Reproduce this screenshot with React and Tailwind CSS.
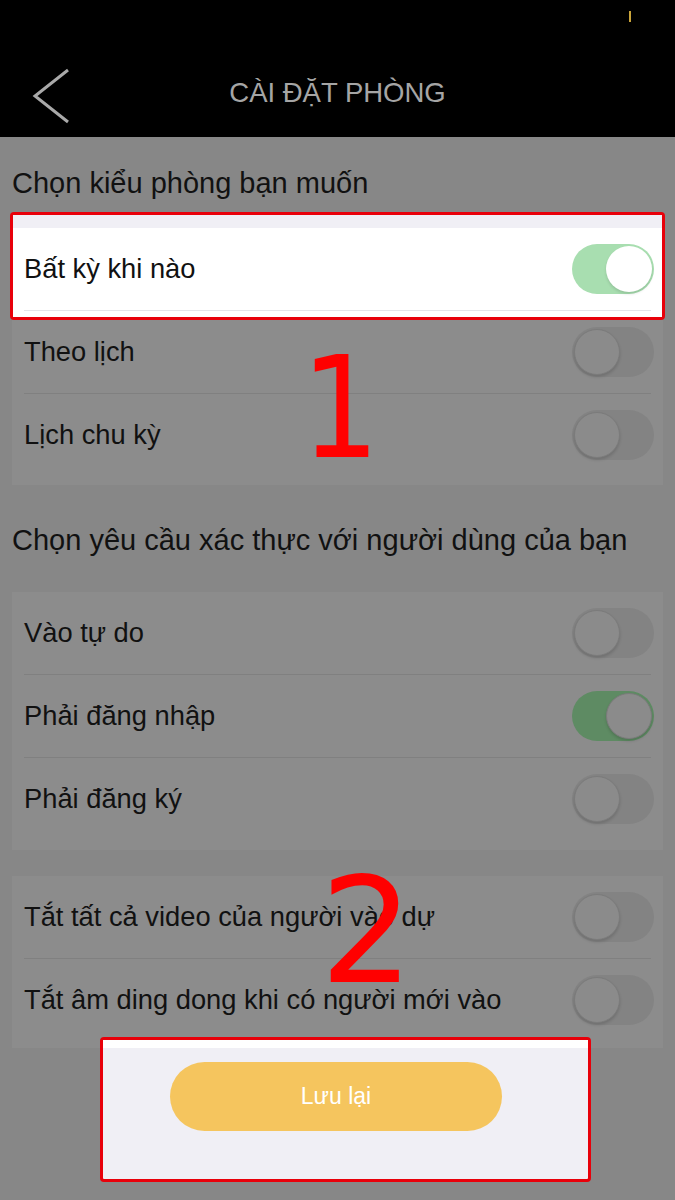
import React from 'react';

const FONT = { fontFamily: '"Liberation Sans", Arial, sans-serif' };

function Toggle({ on, bright }) {
  if (bright) {
    return (
      <div className="w-[82px] h-[50px] rounded-full p-[2px] flex justify-end bg-[#a8deb0]">
        <div className="w-[46px] h-[46px] rounded-full bg-white shadow-[0_2px_3px_rgba(0,0,0,0.12)]" />
      </div>
    );
  }
  return (
    <div
      className={
        on
          ? 'w-[82px] h-[50px] rounded-full p-[2px] flex justify-end bg-[#5e8b63]'
          : 'w-[82px] h-[50px] rounded-full p-[2px] flex bg-[#838383]'
      }
    >
      <div className="w-[46px] h-[46px] rounded-full bg-[#8b8b8b] border border-[#7b7b7b] shadow-[0_2px_3px_rgba(0,0,0,0.15)]" />
    </div>
  );
}

function Row({ label, on, bright, last, lightLine }) {
  return (
    <div className={bright ? 'bg-white' : ''}>
      <div className="h-[82px] flex items-center justify-between pl-[12px] pr-[9px]">
        <span className="text-[27.3px] text-[#111]">{label}</span>
        <Toggle on={on} bright={bright} />
      </div>
      {!last && (
        <div className="px-[12px]">
          <div className={lightLine ? 'h-px bg-[#e4e4e9]' : 'h-px bg-[#808080]'} />
        </div>
      )}
    </div>
  );
}

function Card({ children, pb }) {
  return <div className={'mx-[12px] bg-[#8c8c8c] ' + pb}>{children}</div>;
}

export default function App() {
  return (
    <div className="relative w-[675px] h-[1200px] overflow-hidden bg-[#878787]" style={FONT}>
      {/* header */}
      <header className="bg-black h-[137px] flex flex-col">
        <div className="h-[48px] flex justify-end pr-[44px] pt-[11px]">
          <div className="w-[2px] h-[11px] bg-[#c9a43a]" />
        </div>
        <div className="flex-1 grid grid-cols-[100px_1fr_100px] items-center">
          <div className="pl-[32px] pt-[6px]">
            <svg width="38" height="56" viewBox="0 0 38 56" fill="none">
              <path d="M36 2 L3 28 L36 54" stroke="#a9a9a9" strokeWidth="3" />
            </svg>
          </div>
          <h1 className="text-center text-[27.5px] text-[#a5a5a5] pt-[1px]">CÀI ĐẶT PHÒNG</h1>
          <div />
        </div>
      </header>

      <div className="h-[91px] flex items-center pl-[12px] pt-[2px]">
        <span className="text-[29px] text-[#111]">Chọn kiểu phòng bạn muốn</span>
      </div>

      <Card pb="pb-[9px]">
        <Row label="Bất kỳ khi nào" bright lightLine />
        <Row label="Theo lịch" />
        <Row label="Lịch chu kỳ" last />
      </Card>

      <div className="h-[107px] flex items-center pl-[12px] pt-[4px]">
        <span className="text-[29px] text-[#111]">Chọn yêu cầu xác thực với người dùng của bạn</span>
      </div>

      <Card pb="pb-[10px]">
        <Row label="Vào tự do" />
        <Row label="Phải đăng nhập" on />
        <Row label="Phải đăng ký" last />
      </Card>

      <div className="h-[26px]" />

      <Card pb="pb-[7px]">
        <Row label="Tắt tất cả video của người vào dự" />
        <Row label="Tắt âm ding dong khi có người mới vào" last />
      </Card>

      {/* highlighted save area */}
      <div className="relative z-10 mt-[-11px] ml-[100px] w-[491px] h-[145px] border-[3px] border-[#e8000a] rounded-[4px] bg-[#f0eff5] flex flex-col">
        <div className="h-[8px] bg-white" />
        <button className="mt-[14px] ml-[67px] w-[332px] h-[69px] rounded-[35px] bg-[#f5c55e] text-white text-[23px]">
          Lưu lại
        </button>
      </div>

      {/* highlight around first option */}
      <div className="absolute left-[10px] top-[212px] w-[655px] h-[108px] border-[3px] border-[#e8000a] rounded-[4px] flex flex-col">
        <div className="h-[13px] bg-[#f0eff5]" />
        <div className="flex-1" />
        <div className="h-[6px] bg-white" />
      </div>

      {/* step numbers */}
      <span
        className="absolute left-[296px] top-[339px] text-[140px] leading-none text-[#ff0000] scale-x-[0.88]"
        style={{ fontFamily: '"DejaVu Sans", sans-serif' }}
      >
        1
      </span>
      <span
        className="absolute left-[320px] top-[858px] text-[147px] leading-none text-[#ff0000]"
        style={{ fontFamily: '"DejaVu Sans", sans-serif' }}
      >
        2
      </span>
    </div>
  );
}
